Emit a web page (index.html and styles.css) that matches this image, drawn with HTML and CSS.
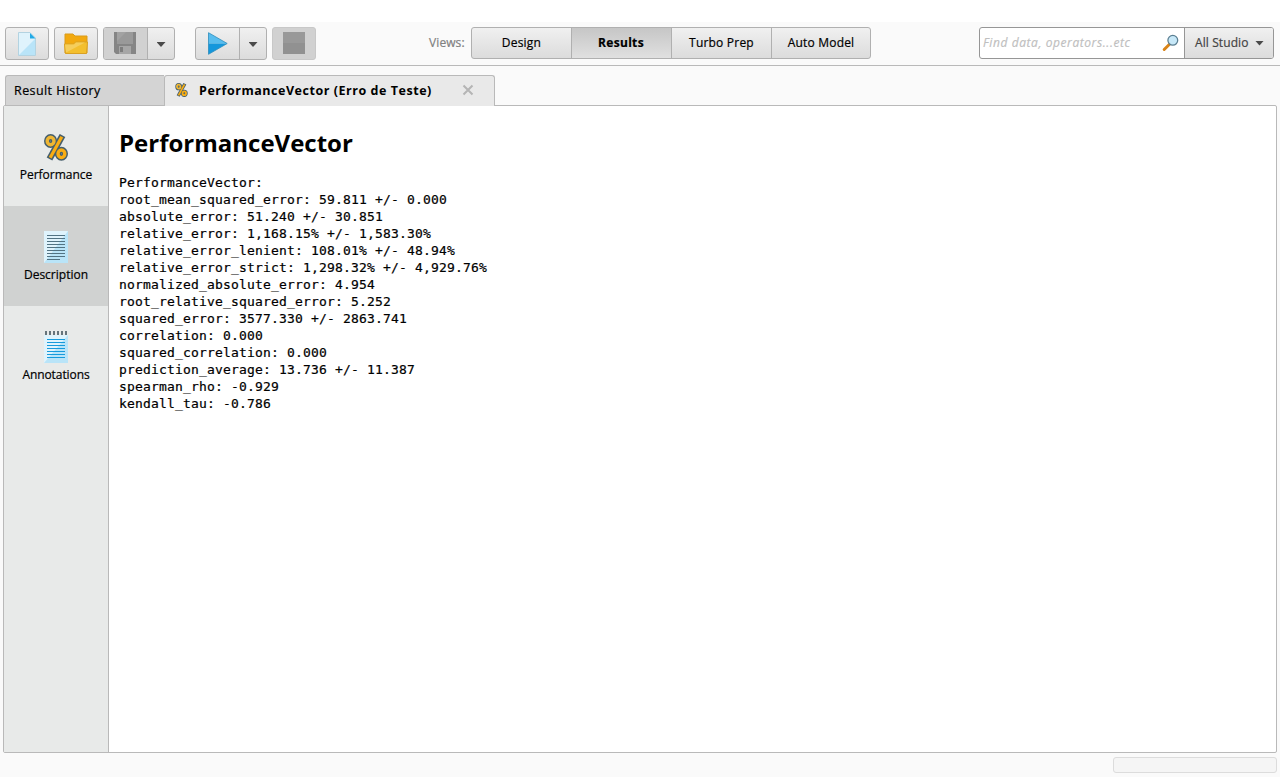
FILE: index.html
```html
<!DOCTYPE html>
<html lang="en">
<head>
<meta charset="utf-8">
<title>PerformanceVector</title>
<link rel="stylesheet" href="styles.css">
</head>
<body>
<svg class="defs" width="0" height="0">
  <symbol id="percent" viewBox="0 0 24 27">
    <g fill="none" stroke="#465f6c" stroke-width="6.400">
      <ellipse cx="6.600" cy="7" rx="3.400" ry="3.800"/><ellipse cx="17.400" cy="19.800" rx="3.400" ry="3.800"/>
      <path d="M18.500 1.500 5.500 25" stroke-width="6.400"/>
    </g>
    <g fill="none" stroke="#f9ad13" stroke-width="3.400">
      <ellipse cx="6.600" cy="7" rx="3.400" ry="3.800" stroke="#efb632"/><ellipse cx="17.400" cy="19.800" rx="3.400" ry="3.800"/>
      <path d="M17.800 2.800 6.200 23.700" stroke-width="3.200"/>
    </g>
  </symbol>
</svg>
<div class="app">
  <header class="toolbar">
    <button class="btn new"><svg width="18" height="24" viewBox="0 0 18 24"><path d="M.5.5H12L17.5 6v17.5H.5z" fill="#dff3fc" stroke="#b3d3e1"/><path d="M17 7v16H1z" fill="#b9e4f8"/><path d="M12 1v5.5h5.5z" fill="#22a9e5"/></svg></button>
    <button class="btn open"><svg width="24" height="21" viewBox="0 0 24 21"><path d="M1 1h8l2 2h12v17H1z" fill="#f2a90f" stroke="#d99b1a"/><path d="M.5 11h9l2-2h12L22.500 20.500h-21z" fill="#f3bf2e" stroke="#d9a125"/><path d="M1 11.500h9l2-2h9L3 19H2z" fill="#f5ce5c"/></svg></button>
    <div class="split save"><button class="main off"><svg width="22" height="22" viewBox="0 0 22 22"><path d="M0 0h22v22H2l-2-2z" fill="#858585"/><path d="M3 0h16v12H3z" fill="#a2a2a2"/><path d="M3 9 12 0h7v12H3z" fill="#999"/><path d="M5 14h12v8H5z" fill="#a6a6a6"/><path d="M6 15h3v5H6z" fill="#7d7d7d"/></svg></button><button class="drop"><i class="arrow"></i></button></div>
    <div class="split run"><button class="main"><svg width="20" height="23" viewBox="0 0 20 23"><path d="M.5.7v10.800h18.700z" fill="#58bdee"/><path d="M.5 22.300V11.500h18.700z" fill="#1497dc"/><path d="M.5.7v21.600l18.700-10.800z" fill="none" stroke="#2c8dbd" stroke-width=".8"/></svg></button><button class="drop"><i class="arrow"></i></button></div>
    <button class="btn stop off"><svg width="22" height="22"><path d="M0 0h22v22H0z" fill="#919191"/><path d="M0 0h22v11H0z" fill="#999"/></svg></button>
    <span class="views-label">Views:</span>
    <nav class="views"><button class="view">Design</button><button class="view on">Results</button><button class="view">Turbo Prep</button><button class="view">Auto Model</button></nav>
    <div class="search"><div class="field"><span class="hint">Find data, operators...etc</span><svg width="18" height="18" viewBox="0 0 18 18"><path d="M2.200 15.500 7 10.700" stroke="#d98419" stroke-width="3" stroke-linecap="round"/><circle cx="10.800" cy="6.300" r="4.900" fill="#c7e8f8" stroke="#5b7f92" stroke-width="1.300"/></svg></div><button class="scope"><span>All Studio</span><i class="arrow"></i></button></div>
  </header>
  <div class="tabs">
    <div class="tab history"><span>Result History</span></div>
    <div class="tab active"><svg width="13" height="14"><use href="#percent"/></svg><span>PerformanceVector (Erro de Teste)</span><svg class="close" width="12" height="12" viewBox="0 0 12 12"><path d="m1.500 1.500 9 9m0-9-9 9" stroke="#b5b5b5" stroke-width="2"/></svg></div>
  </div>
  <main class="panel">
    <aside class="side">
      <div class="item"><svg class="pct" width="24" height="27"><use href="#percent"/></svg><span>Performance</span></div>
      <div class="item selected"><svg width="24" height="32"><path d="M0 0h24v32H0z" fill="#dff3fc"/><path d="M24 0v32H0z" fill="#b9e4f8"/><path d="M3 4.500h18M3 7.500h18M3 10.500h18M3 13.500h18M3 16.500h18M3 19.500h18M3 22.500h18M3 25.500h18M3 28.500h13" stroke="#527383"/></svg><span>Description</span></div>
      <div class="item"><svg width="24" height="32"><path d="M0 4h24v28H0z" fill="#dff3fc"/><path d="M24 4v28H0z" fill="#b9e4f8"/><path d="M3 8.500h18M3 11.500h18M3 14.500h18M3 17.500h18M3 20.500h18M3 23.500h18M3 26.500h18" stroke="#169bdc"/><path d="M2 0v4m4-4v4m4-4v4m4-4v4m4-4v4m4-4v4" stroke="#66747b" stroke-width="2"/></svg><span class="notes">Annotations</span></div>
    </aside>
    <section class="content">
      <h1>PerformanceVector</h1>
<pre>PerformanceVector:
root_mean_squared_error: 59.811 +/- 0.000
absolute_error: 51.240 +/- 30.851
relative_error: 1,168.15% +/- 1,583.30%
relative_error_lenient: 108.01% +/- 48.94%
relative_error_strict: 1,298.32% +/- 4,929.76%
normalized_absolute_error: 4.954
root_relative_squared_error: 5.252
squared_error: 3577.330 +/- 2863.741
correlation: 0.000
squared_correlation: 0.000
prediction_average: 13.736 +/- 11.387
spearman_rho: -0.929
kendall_tau: -0.786</pre>
    </section>
  </main>
  <footer class="status"><div class="meter"></div></footer>
</div>
</body>
</html>
```
FILE: styles.css
```css
* { box-sizing: border-box; }
body { margin: 0; background: #fff; color: #000; font: 500 12px/16px "Open Sans", "Noto Sans", sans-serif; -webkit-text-stroke: .2px currentColor; }
.defs { display: block; }
svg { display: block; flex: none; }
button { margin: 0; padding: 0; border: 0; background: none; font: inherit; color: inherit; }
.app { height: 777px; padding-top: 22px; display: flex; flex-direction: column; background: linear-gradient(#fff 22px, #fafafa 22px); overflow: hidden; }
.toolbar { height: 44px; flex: none; padding: 5px 6px 0 5px; border-bottom: 1px solid #b9b9b9; display: flex; align-items: flex-start; }
.btn, .split { height: 33px; border: 1px solid #b0b0b0; border-radius: 3px; background: linear-gradient(#f0f0f0, #dcdcdc); display: flex; align-items: center; justify-content: center; flex: none; }
.btn { width: 44px; }
.open { margin-left: 5px; }
.btn.off { background: #d1d1d1; border-color: #c8c8c8; }
.split { overflow: hidden; align-items: stretch; justify-content: flex-start; }
.main, .drop { display: flex; align-items: center; justify-content: center; }
.main { width: 43px; }
.main.off { background: #d1d1d1; padding: 0 2px 2px 0; }
.drop { flex: 1; border-left: 1px solid #b0b0b0; padding-top: 2px; }
.save { width: 72px; margin-left: 5px; }
.run { width: 72px; margin-left: 20px; }
.stop { margin-left: 5px; padding-bottom: 1px; }
.arrow { width: 9px; height: 5px; background: #4a4a4a; clip-path: polygon(0 0, 100% 0, 50% 100%); }
.views-label { width: 42px; margin: 8px 0 0 113px; color: #808080; letter-spacing: .1px; white-space: nowrap; }
.views { width: 400px; height: 32px; border: 1px solid #b0b0b0; border-radius: 3px; display: flex; background: linear-gradient(#f0f0f0, #dcdcdc); overflow: hidden; }
.view { width: 100px; border-right: 1px solid #b0b0b0; letter-spacing: .2px; }
.view:last-child { border: 0; width: 98px; }
.view.on { background: linear-gradient(#c6c6c6, #e0e0e0); font-weight: 700; letter-spacing: .3px; padding-right: 1px; }
.search { width: 295px; height: 32px; margin-left: auto; border: 1px solid #969696; border-radius: 3px; display: flex; background: #fff; overflow: hidden; }
.field { flex: 1; display: flex; align-items: center; justify-content: space-between; padding: 0 4px 0 3px; }
.hint { color: #bfbfbf; font-style: italic; white-space: nowrap; letter-spacing: .58px; }
.scope { width: 89px; border-left: 1px solid #969696; background: linear-gradient(#f0f0f0, #dcdcdc); color: #444; display: flex; align-items: center; justify-content: space-between; padding: 0 9px 0 10px; letter-spacing: .1px; }
.tabs { height: 39px; flex: none; padding: 9px 0 0 5px; display: flex; }
.tab { height: 30px; border: 1px solid #b9b9b9; border-bottom: 0; display: flex; align-items: center; white-space: nowrap; }
.history { width: 159px; border-right: 0; border-radius: 3px 0 0 0; background: #d4d4d4; padding-left: 8px; font-size: 12.5px; letter-spacing: .42px; }
.active { width: 331px; height: 31px; position: relative; z-index: 1; background: #e9e9e9; border-radius: 3px 3px 0 0; padding-left: 10px; font-size: 12.5px; font-weight: 700; letter-spacing: .54px; -webkit-text-stroke: 0; }
.active svg:first-child { margin-bottom: 2px; }
.active span { width: 233px; margin-left: 11px; }
.close { margin: 0 0 2px 30px; }
.panel { flex: 1; margin: 0 3px; border: 1px solid #b9b9b9; border-radius: 2px; background: #fff; display: flex; }
.side { width: 105px; background: #e8eae9; border-right: 1px solid #b9b9b9; }
.item { height: 100px; padding-top: 25px; display: flex; flex-direction: column; align-items: center; }
.item .pct { margin-top: 3px; }
.item span { margin-top: auto; margin-bottom: 23px; white-space: nowrap; }
.item .notes { letter-spacing: -.08px; }
.item.selected { background: #d0d2d1; }
.content { padding: 21px 10px; }
h1 { margin: 0; font: 700 24px/32px "Open Sans", sans-serif; -webkit-text-stroke: 0; }
pre { margin: 15px 0 0; font: 13px/17px "DejaVu Sans Mono", monospace; letter-spacing: .174px; -webkit-text-stroke: .2px #000; }
.status { height: 24px; flex: none; padding: 4px 3px 0; display: flex; justify-content: flex-end; }
.meter { width: 164px; height: 16px; border: 1px solid #dcdcdc; border-radius: 3px; background: #f5f5f5; }
```
